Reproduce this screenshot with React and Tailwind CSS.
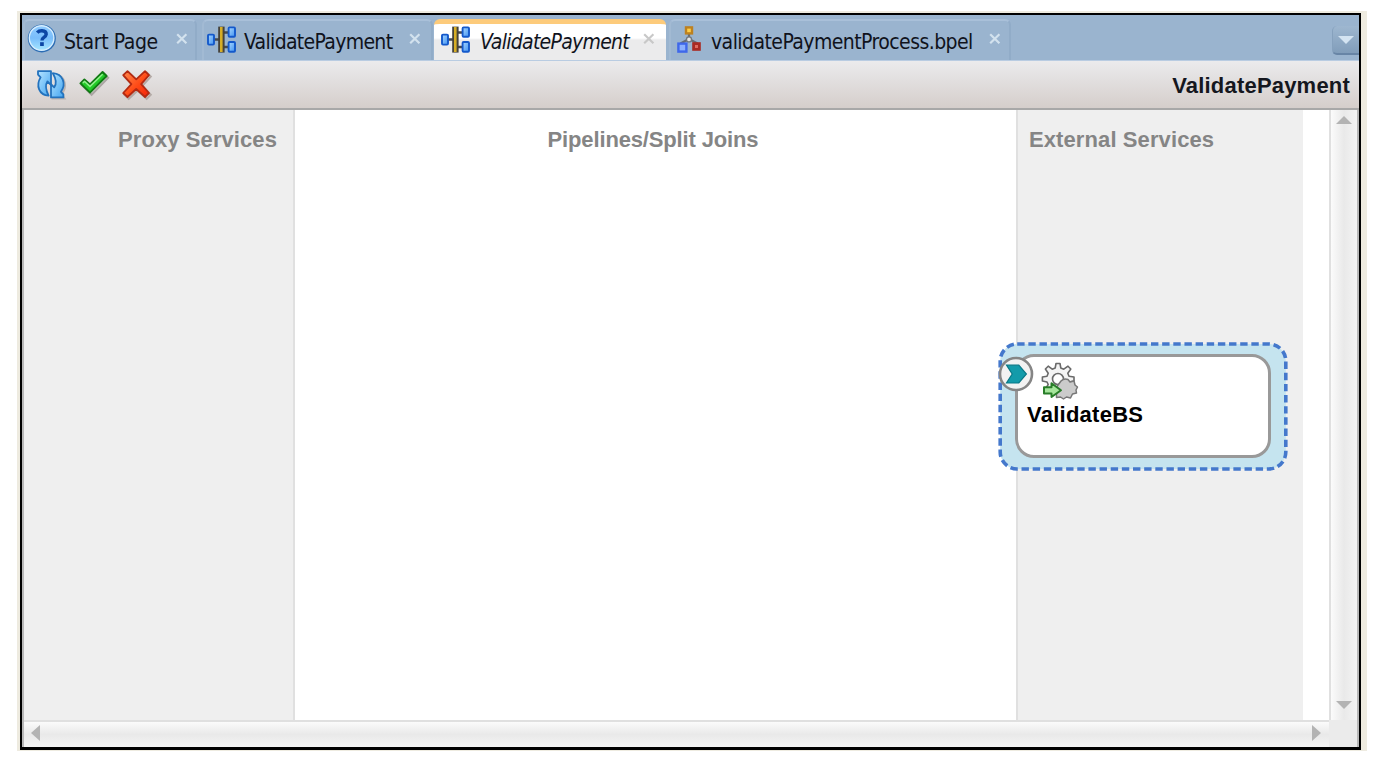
import React from "react";

const TAB_FONT = "font-['DejaVu_Sans_Condensed','DejaVu_Sans',sans-serif] [font-stretch:condensed]";

function HelpIcon() {
  return (
    <svg width="30" height="30" viewBox="0 0 30 30" className="block shrink-0">
      <defs>
        <linearGradient id="help" x1="0" y1="0" x2="0" y2="1">
          <stop offset="0" stopColor="#8fcbff" />
          <stop offset="0.5" stopColor="#79bdfb" />
          <stop offset="1" stopColor="#a5e6ff" />
        </linearGradient>
      </defs>
      <circle cx="14.8" cy="15.4" r="14" fill="#2b6cb4" />
      <circle cx="14.6" cy="15" r="12.3" fill="url(#help)" stroke="#d6eeff" strokeWidth="1.4" />
      <path d="M10.2 9.6 Q12 7.6 15 7.7 Q19.4 8 19.2 11.3 Q19 13.2 16.8 14.4 Q15 15.4 15 17.6" fill="none" stroke="#0c46a5" strokeWidth="3.4" />
      <rect x="13.1" y="19.2" width="3.7" height="3.8" fill="#0c46a5" />
    </svg>
  );
}

function PipelineIcon() {
  return (
    <svg width="31" height="30" viewBox="0 0 31 30" className="block shrink-0">
      <defs>
        <linearGradient id="node" x1="0" y1="0" x2="1" y2="1">
          <stop offset="0" stopColor="#a9d8ff" />
          <stop offset="1" stopColor="#3f92f2" />
        </linearGradient>
      </defs>
      <path d="M8 15.5H14M17 8.5H23M17 23H23" stroke="#464a50" strokeWidth="2.4" />
      <rect x="12.2" y="2.6" width="6.4" height="26" fill="#45423a" />
      <rect x="14" y="3" width="2.6" height="25" fill="#d7ae25" />
      <rect x="2" y="10.6" width="6" height="10" rx="1" fill="url(#node)" stroke="#1459cb" strokeWidth="1.9" />
      <rect x="22.6" y="3.4" width="6.4" height="9.4" rx="1" fill="url(#node)" stroke="#1459cb" strokeWidth="1.9" />
      <rect x="22.6" y="18" width="6.4" height="9.8" rx="1" fill="url(#node)" stroke="#1459cb" strokeWidth="1.9" />
    </svg>
  );
}

function ProcessIcon() {
  return (
    <svg width="26" height="30" viewBox="0 0 26 30" className="block shrink-0">
      <path d="M13 8V14M13 14L4.5 18.5M13 14L21.5 18.5" stroke="#666d75" strokeWidth="2.2" fill="none" />
      <circle cx="13" cy="14.4" r="2.5" fill="#e5e5e5" stroke="#72777d" strokeWidth="1.3" />
      <rect x="10" y="2.4" width="6" height="6" fill="#ffd04a" stroke="#bd8120" strokeWidth="2.4" />
      <rect x="2.4" y="18.6" width="8" height="8" fill="#8bb0ff" stroke="#3f68ea" strokeWidth="2.4" />
      <rect x="17.6" y="18.6" width="5.8" height="5.8" fill="#df6c60" stroke="#a92a22" strokeWidth="2.8" />
    </svg>
  );
}

function CloseX({ color }) {
  return (
    <svg width="12" height="12" viewBox="0 0 12 12" className="block shrink-0">
      <path d="M1.2 1.2L10.4 10.2M10.4 1.2L1.2 10.2" stroke={color} strokeWidth="2.2" />
    </svg>
  );
}

function RefreshIcon() {
  return (
    <svg width="32" height="32" viewBox="0 0 32 32" className="block">
      <defs>
        <linearGradient id="sync" x1="0" y1="0" x2="1" y2="1">
          <stop offset="0" stopColor="#b5e4ff" />
          <stop offset="1" stopColor="#43a5f1" />
        </linearGradient>
      </defs>
      <path d="M16.5 29.6H29.5L26.5 25C32.5 18.5 30.5 7.5 21.5 5.5" stroke="#bbb4b1" strokeWidth="2" fill="none" />
      <path d="M3 2.2H16V16L12.4 12.4C10 16 10.6 20.5 13.6 26.6C4 26 .6 16.5 5.6 8.4L3 5.6Z" fill="url(#sync)" stroke="#2372bd" strokeWidth="1.8" strokeLinejoin="round" />
      <path d="M28.4 28.4H16V15.2L19.2 18.4C21.8 15 21.2 10 17.8 4.2C27.8 5 31.6 14.6 26 22.8L28.4 25.4Z" fill="url(#sync)" stroke="#2372bd" strokeWidth="1.8" strokeLinejoin="round" />
    </svg>
  );
}

function CheckIcon() {
  return (
    <svg width="32" height="30" viewBox="0 0 32 30" className="block">
      <path d="M2.6 14.6L6.8 10.8L12.4 15.8L25 3.4L29 7.4L12.4 24.4Z" fill="none" stroke="#aba5a3" strokeWidth="2" transform="translate(1.2 1.4)" />
      <path d="M2.4 14.4L6.4 10.4L12 15.4L24.6 3L28.6 7L12 23.6Z" fill="#22cb28" stroke="#117914" strokeWidth="1.9" strokeLinejoin="round" />
      <path d="M4.8 13.8L6.6 12.4L12 17.4L24.6 5.2" fill="none" stroke="#8ff08a" strokeWidth="1.5" />
    </svg>
  );
}

function CrossIcon() {
  return (
    <svg width="32" height="32" viewBox="0 0 32 32" className="block">
      <defs>
        <linearGradient id="cross" x1="0" y1="0" x2="1" y2="1">
          <stop offset="0" stopColor="#ff8a4e" />
          <stop offset="0.55" stopColor="#ff4a16" />
          <stop offset="1" stopColor="#f32108" />
        </linearGradient>
      </defs>
      <path d="M6.5 2.2L15.5 10.8L24.5 2.2L28.6 6.4L20.2 15.5L28.6 24.6L24.5 28.6L15.5 20.2L6.5 28.6L2.2 24.6L10.8 15.5L2.2 6.4Z" fill="none" stroke="#b4aaa6" strokeWidth="2" transform="translate(1.2 1.2)" />
      <path d="M6.5 2.2L15.2 10.4L24 2.2L28 6.2L20.2 15.2L28 24L24 28L15.2 20L6.5 28L2.2 24L10.4 15.2L2.2 6.2Z" fill="url(#cross)" stroke="#b32a12" strokeWidth="1.8" strokeLinejoin="round" />
    </svg>
  );
}

function ServiceIcon() {
  return (
    <svg width="38" height="40" viewBox="0 0 38 40" className="block">
      <path d="M15 2.5h4l.8 4.5 3 1.2 4.2-3 2.8 2.8-3 4.2 1.2 3 5 .8v4l-5 1-1.2 2.6 3 4-2.8 2.8-4.2-3-3 1.4-.8 4.5h-4l-.8-4.5-3-1.4-4 3-2.8-2.8 2.8-4-1.2-2.6-4.6-1v-4l4.6-.8 1.2-3-2.8-4.2L7.2 5.2l4 3 3-1.2z" fill="#f4f4f4" stroke="#6a6a6a" strokeWidth="1.6" strokeLinejoin="round" />
      <circle cx="17" cy="18" r="5.5" fill="#fff" stroke="#6a6a6a" strokeWidth="1.6" />
      <path d="M20 20q3-3 7-1.5l2 2.5 4-1 1 4 2.5 2-1.5 3 .5 3-4 1-2 4-4-1-3 2-3-2-4 .5v-5l-1-4z" fill="#cbcbcb" stroke="#777" strokeWidth="1.5" strokeLinejoin="round" />
      <path d="M3 26.3H10.5V22.2L20 29.2L10.5 36V32.4H3Z" fill="#a6e59c" stroke="#287d28" strokeWidth="2" strokeLinejoin="round" />
    </svg>
  );
}

function Arrow({ points, w, h, color = "#b3b3b3" }) {
  return (
    <svg width={w} height={h} viewBox={`0 0 ${w} ${h}`} className="block shrink-0">
      <polygon points={points} fill={color} />
    </svg>
  );
}

function Tab({ className, icon, label, labelClass, close = "#d3e2ee", closePad = "pt-[12px]" }) {
  return (
    <div className={`flex h-[41px] shrink-0 items-start ${className}`}>
      {icon}
      <span className={`block shrink-0 whitespace-nowrap text-[21px] leading-[26px] text-[#10131c] ${TAB_FONT} ${labelClass}`}>{label}</span>
      <div className={closePad}><CloseX color={close} /></div>
    </div>
  );
}

const IDLE = "rounded-t-[6px] border-t-2 border-x-2 border-t-[#a9c0d9] border-l-[#a2bad3] border-r-[#91acc8] bg-[#9ab4cf]";

export default function App() {
  return (
    <div className="h-[766px] w-[1374px] overflow-hidden bg-white pt-[11px] pl-[17px] font-['Liberation_Sans',Arial,sans-serif]">
      <div className="h-[740px] w-[1350px] bg-[#eeebe0] pt-[2px] pl-[3px]">
        <div className="flex h-[737px] w-[1341px] flex-col border-2 border-b-[3px] border-black bg-[#efefef]">
          <div className="flex h-[46px] shrink-0 items-end border-b border-[#b9cce2] bg-[#9ab4cf]">
            <Tab className={`ml-px w-[174px] ${IDLE}`} icon={<div className="w-[39px] pt-[2px] pl-[2px]"><HelpIcon /></div>} label="Start Page" labelClass="mt-[8px] w-[112px] tracking-[-0.4px]" />
            <Tab className={`ml-[5px] w-[231px] ${IDLE}`} icon={<div className="w-[40px] pt-[3px] pl-[2px]"><PipelineIcon /></div>} label="ValidatePayment" labelClass="mt-[8px] w-[165px] tracking-[-0.68px]" />
            <Tab className="ml-[1px] w-[232px] rounded-t-[6px] border-t-[5px] border-[#fdcb7b] bg-[linear-gradient(#ffffff_0px,#ffffff_14px,#ebebec_16px,#ebebec_100%)]" icon={<div className="w-[46px] pl-[6px]"><PipelineIcon /></div>} label="ValidatePayment" labelClass="mt-[5px] w-[163px] italic tracking-[-0.72px]" close="#c8c8c8" closePad="pt-[9px]" />
            <Tab className={`ml-[3px] w-[342px] ${IDLE}`} icon={<div className="w-[40px] pt-[4px] pl-[5px]"><ProcessIcon /></div>} label="validatePaymentProcess.bpel" labelClass="mt-[8px] w-[278px] tracking-[-0.56px]" />
            <div className="mb-[5px] ml-auto flex h-[29px] w-[27px] items-center justify-center rounded-l-[5px] border-b-2 border-l border-b-[#6885a6] border-l-[#86a1bd] bg-gradient-to-b from-[#9eb7d0] to-[#819dba]">
              <Arrow w={16} h={8} points="0,0 16,0 8,8" color="#d4e4f2" />
            </div>
          </div>

          <div className="flex h-[49px] shrink-0 items-start border-b-2 border-[#a8a8a8] bg-gradient-to-b from-[#ebebed] to-[#d5cecb] pl-[13px]">
            <div className="w-[43px] pt-[8px]"><RefreshIcon /></div>
            <div className="w-[43px] pt-[8px]"><CheckIcon /></div>
            <div className="pt-[8px]"><CrossIcon /></div>
            <span className="mt-[12px] mr-[9px] ml-auto block text-[22px] leading-[26px] font-bold tracking-[0.2px] whitespace-nowrap text-[#15171e]">ValidatePayment</span>
          </div>

          <div className="flex min-h-0 flex-1 border-x-2 border-[#b8b8b8]">
            <div className="flex min-w-0 flex-1 flex-col">
              <div className="flex min-h-0 flex-1 bg-white text-[22px] leading-[26px] font-bold text-[#858585]">
                <div className="w-[271px] shrink-0 border-r-2 border-[#e0e0e0] bg-[#efefef] pt-[17px] pr-[16px] text-right tracking-[0.08px] whitespace-nowrap">Proxy Services</div>
                <div className="w-[721px] shrink-0 pt-[17px] pr-[5px] text-center tracking-[-0.15px] whitespace-nowrap">Pipelines/Split Joins</div>
                <div className="relative w-[287px] shrink-0 border-l-2 border-[#e0e0e0] bg-[#efefef] pt-[17px] pl-[11px] tracking-[0.1px] whitespace-nowrap">
                  External Services
                  <div className="absolute top-[232px] left-[-20px] h-[129px] w-[290px]">
                    <svg width="290" height="129" viewBox="0 0 290 129" className="absolute inset-0">
                      <rect x="2.2" y="2" width="285.6" height="125" rx="17" fill="#c5e4ef" stroke="#4478cc" strokeWidth="3.6" strokeDasharray="7.4 3.75" />
                    </svg>
                    <div className="absolute top-[12px] left-[17px] h-[104px] w-[256px] rounded-[19px] border-[3px] border-[#999] bg-white pt-[4px] pl-[9px]">
                      <div className="pl-[14px]"><ServiceIcon /></div>
                      <div className="mt-[1px] tracking-[0.25px] text-black">ValidateBS</div>
                    </div>
                    <svg width="36" height="36" viewBox="0 0 36 36" className="absolute top-[14px] left-0">
                      <circle cx="18" cy="18" r="16" fill="#f2f2f2" stroke="#858585" strokeWidth="2.6" />
                      <path d="M8.5 9.2H20.8L28.4 18L20.8 27H8.5L14.2 18Z" fill="#139baa" stroke="#087887" strokeWidth="1.2" />
                    </svg>
                  </div>
                </div>
              </div>
              <div className="flex h-[27px] shrink-0 items-center justify-between border-t-2 border-[#e0e0e0] bg-gradient-to-b from-[#fbfbfb] via-[#e9e9e9] to-[#f4f4f4] pr-[8px] pb-[3px] pl-[7px]">
                <Arrow w={9} h={16} points="9,0 9,16 0,8" />
                <Arrow w={9} h={16} points="0,0 0,16 9,8" />
              </div>
            </div>
            <div className="flex w-[28px] shrink-0 flex-col">
              <div className="flex min-h-0 flex-1 flex-col items-center justify-between border-l-2 border-[#e0e0e0] bg-gradient-to-r from-[#fbfbfb] via-[#e9e9e9] to-[#f4f4f4] pt-[6px] pb-[11px]">
                <Arrow w={16} h={8} points="0,8 16,8 8,0" />
                <Arrow w={16} h={8} points="0,0 16,0 8,8" />
              </div>
              <div className="h-[27px] shrink-0 bg-[#ebebeb]" />
            </div>
          </div>
        </div>
      </div>
    </div>
  );
}
